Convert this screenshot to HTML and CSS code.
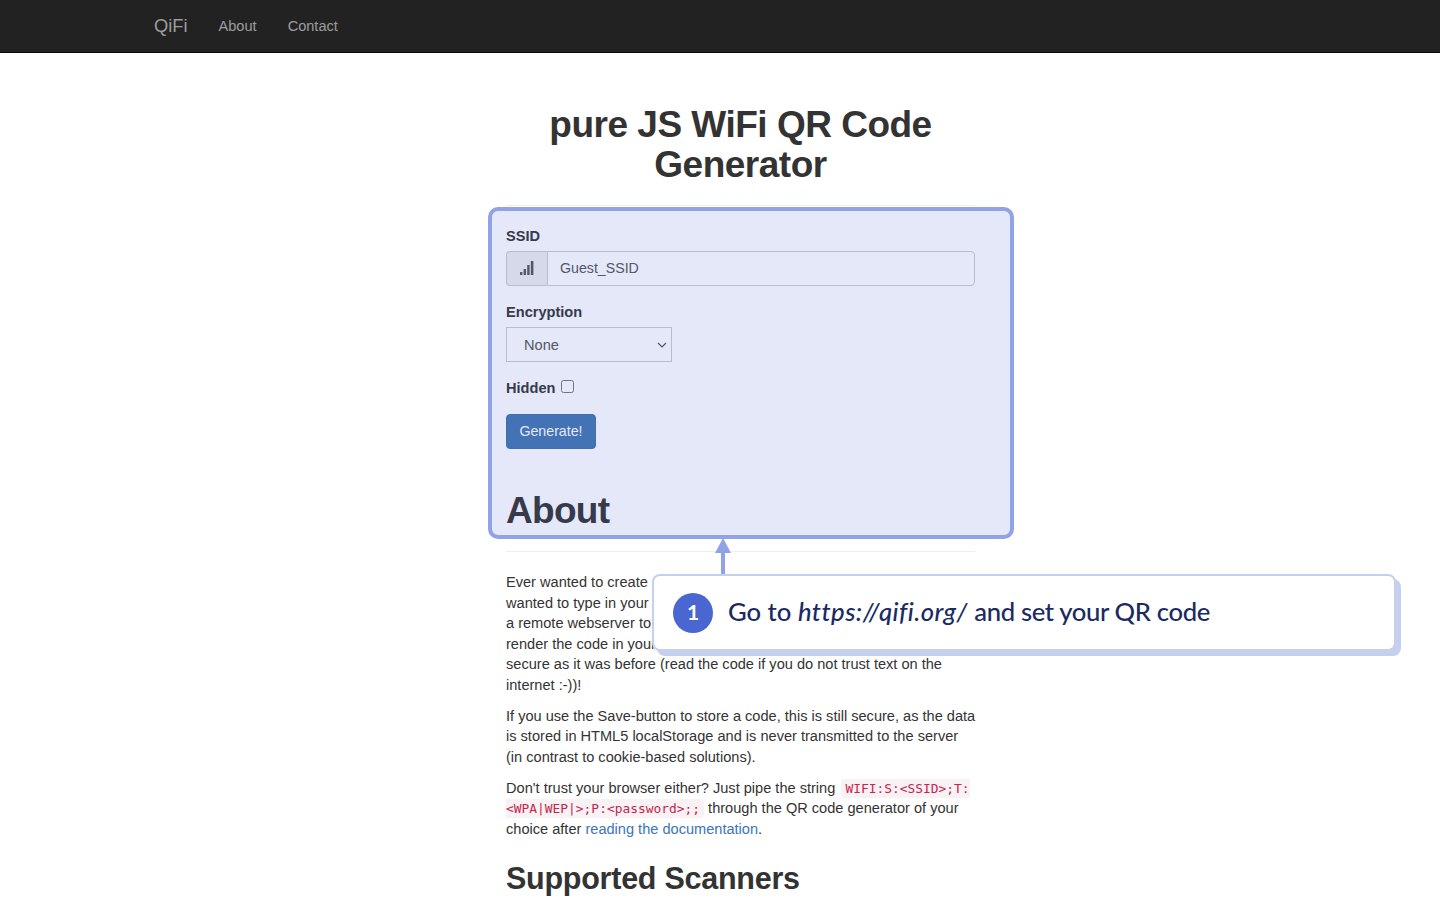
FILE: index.html
```html
<!DOCTYPE html>
<html lang="en">
<head>
  <meta charset="UTF-8">
  <meta name="viewport" content="width=device-width, initial-scale=1.0">
  <title>QiFi</title>
  <link rel="stylesheet" href="styles.css">
</head>
<body>

  <nav class="navbar">
    <a class="navbar-brand" href="#">QiFi</a>
    <a class="nav-link" href="#">About</a>
    <a class="nav-link" href="#">Contact</a>
  </nav>

  <main class="content">
    <h1 class="page-title">pure JS WiFi QR Code Generator</h1>
    <hr class="title-rule">

    <form class="qr-form">
      <label class="field-label" for="ssid">SSID</label>
      <div class="input-group">
        <span class="input-addon">
          <svg width="14" height="14" viewBox="0 0 14 14" fill="#555">
            <rect x="0" y="11" width="2.4" height="3"/>
            <rect x="3.6" y="8" width="2.4" height="6"/>
            <rect x="7.2" y="4" width="2.4" height="10"/>
            <rect x="10.8" y="0" width="2.6" height="14"/>
          </svg>
        </span>
        <input class="text-input" id="ssid" type="text" placeholder="Guest_SSID">
      </div>

      <label class="field-label" for="encryption">Encryption</label>
      <select class="select-input" id="encryption">
        <option>None</option>
        <option>WEP</option>
        <option>WPA</option>
      </select>

      <div class="hidden-row">
        <label class="field-label inline" for="hidden">Hidden</label>
        <input class="check-input" id="hidden" type="checkbox">
      </div>

      <button class="btn-primary" type="button">Generate!</button>
    </form>

    <h1 class="section-title">About</h1>
    <hr class="section-rule">

    <p>Ever wanted to create a QR code for your WiFi network, but never<br>
      wanted to type in your SSID and passphrase into a website that uses<br>
      a remote webserver to generate the code? QiFi uses JavaScript to<br>
      render the code in your browser only, making your WiFi-network as<br>
      secure as it was before (read the code if you do not trust text on the<br>
      internet :-))!</p>
    <p class="fixed-lines">If you use the Save-button to store a code, this is still secure, as the data<br>
      is stored in HTML5 localStorage and is never transmitted to the server<br>
      (in contrast to cookie-based solutions).</p>
    <p>Don't trust your browser either? Just pipe the string <code class="first-code">WIFI:S:&lt;SSID&gt;;T:&lt;WPA|WEP|&gt;;P:&lt;password&gt;;;</code> through the QR code generator of your choice after <a class="doc-link" href="#">reading the documentation</a>.</p>

    <h2 class="sub-title">Supported Scanners</h2>
  </main>

  <!-- tutorial overlay on top of the page -->
  <div class="highlight-box"></div>
  <svg class="callout-arrow" width="18" height="36" viewBox="0 0 18 36" fill="#8fa3e6">
    <polygon points="9,0 17,15 1,15"/>
    <rect x="7" y="14" width="4" height="22"/>
  </svg>
  <div class="callout">
    <span class="step-badge">1</span>
    <span class="callout-text">Go to <em>https://qifi.org/</em> <span class="callout-tail">and set your QR code</span></span>
  </div>

</body>
</html>
```

FILE: styles.css
```css
html, body {
  height: 100%;
  overflow: hidden;
}

body {
  margin: 0;
  background: #fff;
  color: #333;
  font-family: "Liberation Sans", Arial, sans-serif;
  font-size: 14.58px;
  line-height: 20.5px;
}

.navbar {
  display: flex;
  align-items: center;
  height: 52px;
  padding-left: 154px;
  background: #222;
  border-bottom: 1px solid #080808;
}

.navbar a {
  color: #9d9d9d;
  text-decoration: none;
}

.navbar-brand {
  font-size: 18.3px;
  margin-right: 31px;
}

.nav-link {
  margin-right: 31px;
}

.content {
  width: 469px;
  margin-left: 506px;
}

.page-title {
  margin: 52px -20px 0;
  font-size: 37px;
  line-height: 40px;
  font-weight: bold;
  text-align: center;
  letter-spacing: -0.5px;
}

.title-rule {
  margin: 20px 0 20px;
  border: 0;
  border-top: 1px solid #eee;
}

.field-label {
  display: block;
  padding-bottom: 4px;
  font-weight: bold;
}

.field-label.inline {
  display: inline;
  padding: 0;
}

.input-group {
  display: flex;
  height: 35px;
  margin-bottom: 16px;
}

.input-addon {
  display: flex;
  align-items: center;
  justify-content: center;
  box-sizing: border-box;
  width: 41px;
  background: #eee;
  border: 1px solid #ccc;
  border-right: 0;
  border-radius: 4px 0 0 4px;
}

.text-input {
  flex: 1;
  box-sizing: border-box;
  min-width: 0;
  padding: 0 12px;
  border: 1px solid #ccc;
  border-radius: 0 4px 4px 0;
  background: #fff;
  font: inherit;
  font-size: 14.2px;
  color: #555;
}

.text-input::placeholder {
  color: #555;
  opacity: 1;
}

.select-input {
  display: block;
  box-sizing: border-box;
  width: 166px;
  height: 35px;
  margin: 1px 0 16px;
  padding: 2px 0 0 17px;
  appearance: none;
  border: 1px solid #ccc;
  border-radius: 0;
  background: #fff url("data:image/svg+xml,%3Csvg xmlns='http://www.w3.org/2000/svg' width='10' height='6'%3E%3Cpath d='M1 1l4 4 4-4' fill='none' stroke='%23555' stroke-width='1.2'/%3E%3C/svg%3E") no-repeat right 4px center;
  font: inherit;
  color: #555;
}

.hidden-row {
  display: flex;
  align-items: flex-start;
  gap: 6px;
  height: 36px;
}

.check-input {
  width: 13px;
  height: 13px;
  margin: 2px 0 0;
}

.btn-primary {
  display: block;
  width: 90px;
  height: 35px;
  padding: 0;
  background: #4276b0;
  border: 1px solid #3f70a8;
  border-radius: 4px;
  color: #fff;
  font: inherit;
  font-size: 14.2px;
}

.section-title {
  margin: 41px 0 0;
  font-size: 37px;
  line-height: 41px;
  font-weight: bold;
  letter-spacing: -0.7px;
}

.section-rule {
  margin: 20px 0 20px;
  border: 0;
  border-top: 1px solid #eee;
}

p {
  margin: 0 0 10.5px;
}

.fixed-lines {
  white-space: nowrap;
}

code {
  padding: 2px 4px;
  background: #f9f2f4;
  border-radius: 4px;
  color: #c7254e;
  font-family: "DejaVu Sans Mono", monospace;
  font-size: 12.9px;
  line-height: 1;
}

.first-code {
  margin-left: 2px;
}

.doc-link {
  color: #3b74b9;
  text-decoration: none;
}

.sub-title {
  margin: 22px 0 0;
  font-size: 30.5px;
  line-height: 34px;
  font-weight: bold;
  letter-spacing: -0.25px;
}

.highlight-box {
  position: absolute;
  left: 488px;
  top: 207px;
  box-sizing: border-box;
  width: 526px;
  height: 332px;
  background: rgba(77, 103, 214, 0.15);
  border: 4px solid #8fa3e6;
  border-radius: 10px;
}

.callout-arrow {
  position: absolute;
  left: 714px;
  top: 538px;
}

.callout {
  position: absolute;
  left: 652px;
  top: 574px;
  box-sizing: border-box;
  display: flex;
  align-items: center;
  gap: 15px;
  width: 744px;
  height: 77px;
  padding-left: 19px;
  background: #fff;
  border: 2px solid #c5d0ef;
  border-radius: 8px;
  box-shadow: 5px 5px 0 #c5d0ef;
}

.step-badge {
  display: flex;
  align-items: center;
  justify-content: center;
  width: 40px;
  height: 40px;
  border-radius: 50%;
  background: #4a67d1;
  color: #fff;
  font-family: Lato, sans-serif;
  font-size: 21px;
  font-weight: bold;
}

.callout-text {
  padding-bottom: 3px;
  color: #1b2a63;
  font-family: Lato, sans-serif;
  font-size: 25.65px;
  font-weight: 500;
  line-height: 30px;
  font-variant-ligatures: none;
}

.callout-text em {
  letter-spacing: 0.45px;
}

.callout-tail {
  letter-spacing: -0.36px;
}
```
